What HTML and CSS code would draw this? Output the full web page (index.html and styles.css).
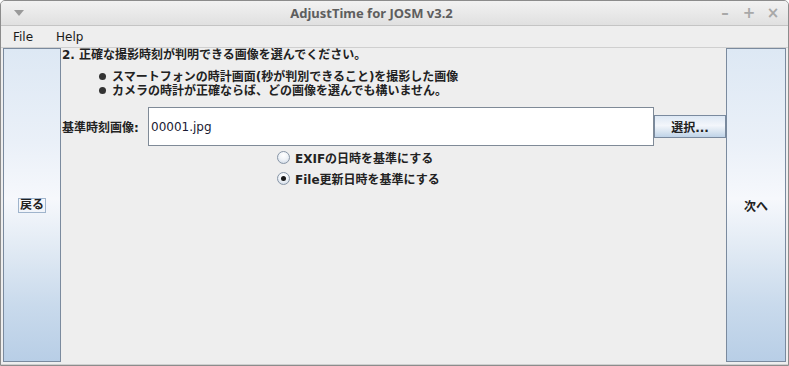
FILE: index.html
```html
<!DOCTYPE html>
<html lang="ja">
  <head>
    <meta charset="UTF-8" />
    <title>AdjustTime for JOSM v3.2</title>
    <link rel="stylesheet" href="styles.css">
  </head>
  <body>
    <div class="window">
      <div class="titlebar">
        <span class="menu-arrow"></span>
        <span class="title">AdjustTime for JOSM v3.2</span>
        <div class="controls">
          <span class="ctl">&#8211;</span>
          <span class="ctl">+</span>
          <span class="ctl">&#215;</span>
        </div>
      </div>

      <div class="menubar">
        <span class="menu">File</span>
        <span class="menu">Help</span>
      </div>

      <div class="main">
        <div class="side-btn left"><span class="focus">戻る</span></div>

        <div class="panel">
          <div class="heading">2. 正確な撮影時刻が判明できる画像を選んでください。</div>
          <ul class="notes">
            <li>スマートフォンの時計画面(秒が判別できること)を撮影した画像</li>
            <li>カメラの時計が正確ならば、どの画像を選んでも構いません。</li>
          </ul>

          <div class="field-row">
            <label class="label">基準時刻画像:</label>
            <div class="textfield">00001.jpg</div>
            <button class="select-btn">選択...</button>
          </div>

          <div class="radios">
            <div class="radio-row"><span class="radio"></span>EXIFの日時を基準にする</div>
            <div class="radio-row"><span class="radio checked"></span>File更新日時を基準にする</div>
          </div>
        </div>

        <div class="side-btn right"><span>次へ</span></div>
      </div>
    </div>
  </body>
</html>
```

FILE: styles.css
```css
body {
  margin: 0;
  background-color: #ffffff;
  font-family: "DejaVu Sans", "Noto Sans CJK JP", sans-serif;
  font-size: 12px;
  color: #222;
}

.window {
  width: 789px;
  height: 366px;
  box-sizing: border-box;
  border: 1px solid #8c8c8c;
  border-radius: 5px 5px 0 0;
  background-color: #d8d8d8;
  display: flex;
  flex-direction: column;
  overflow: hidden;
}

.titlebar {
  height: 24px;
  flex: none;
  display: flex;
  align-items: center;
  position: relative;
  background: linear-gradient(#f2f2f2, #e0e0e0);
  border-bottom: 1px solid #c4c4c4;
}

.menu-arrow {
  width: 0;
  height: 0;
  margin-left: 13px;
  border-left: 5px solid transparent;
  border-right: 5px solid transparent;
  border-top: 6px solid #9a9a9a;
}

.title {
  position: absolute;
  left: 0;
  right: 46px;
  text-align: center;
  font-family: "Noto Sans", sans-serif;
  font-weight: bold;
  font-size: 13px;
  color: #5e5e5e;
}

.controls {
  margin-left: auto;
  margin-right: 8px;
  display: flex;
  gap: 10px;
  position: relative;
}

.ctl {
  width: 14px;
  text-align: center;
  font-family: "DejaVu Sans", sans-serif;
  font-weight: bold;
  font-size: 15px;
  color: #a8a8a8;
}

.menubar {
  height: 21px;
  flex: none;
  display: flex;
  align-items: center;
  gap: 23px;
  padding-left: 12px;
  background-color: #eeeeee;
  border-bottom: 1px solid #cfcfcf;
}

.menu {
  color: #1a1a1a;
}

.main {
  flex: 1;
  display: flex;
  padding: 0 2px 2px 2px;
  background-color: #eeeeee;
  border-bottom: 1px solid #cfcfcf;
}

.side-btn {
  flex: none;
  box-sizing: border-box;
  border: 1px solid #7a8a9e;
  background: linear-gradient(#dde8f4 0%, #eaf0f8 30%, #f6f8fc 48%, #e4ecf5 62%, #c9daec 82%, #b8cee6 100%);
  display: flex;
  align-items: center;
  justify-content: center;
  font-weight: bold;
  color: #222;
}

.side-btn.left {
  width: 58px;
}

.side-btn.right {
  width: 60px;
}

.focus {
  border: 1px solid #9fb4cc;
  padding: 0 1px;
  line-height: 13px;
}

.panel {
  flex: 1;
  padding-left: 1px;
  font-weight: bold;
}

.heading {
  line-height: 14px;
}

.notes {
  margin: 8px 0 0 0;
  padding-left: 37px;
  list-style: none;
}

.notes li {
  line-height: 14px;
}

.notes li::before {
  content: "";
  display: inline-block;
  width: 7px;
  height: 7px;
  border-radius: 50%;
  background-color: #333;
  margin-right: 6px;
  vertical-align: 1px;
}

.field-row {
  margin-top: 9px;
  display: flex;
  align-items: center;
}

.label {
  width: 86px;
}

.textfield {
  width: 506px;
  height: 39px;
  box-sizing: border-box;
  border: 1px solid #7f8a97;
  background-color: #ffffff;
  padding-left: 2px;
  display: flex;
  align-items: center;
  font-weight: normal;
  color: #1a1a33;
}

.select-btn {
  width: 72px;
  height: 23px;
  margin: 0;
  border: 1px solid #7a8a9e;
  background: linear-gradient(#dde8f4 0%, #f3f6fb 45%, #d8e4f0 75%, #bfd3e8 100%);
  font-family: inherit;
  font-size: 12px;
  font-weight: bold;
  color: #222;
}

.radios {
  margin-top: 1px;
  padding-left: 215px;
}

.radio-row {
  height: 21px;
  display: flex;
  align-items: center;
}

.radio {
  width: 13px;
  height: 13px;
  box-sizing: border-box;
  border: 1px solid #8795a6;
  border-radius: 50%;
  background: radial-gradient(circle at 50% 30%, #ffffff 0%, #eef2f7 50%, #c8d4e2 100%);
  margin-right: 5px;
  display: flex;
  align-items: center;
  justify-content: center;
}

.radio.checked::after {
  content: "";
  width: 5px;
  height: 5px;
  border-radius: 50%;
  background-color: #1a1a1a;
}
```
